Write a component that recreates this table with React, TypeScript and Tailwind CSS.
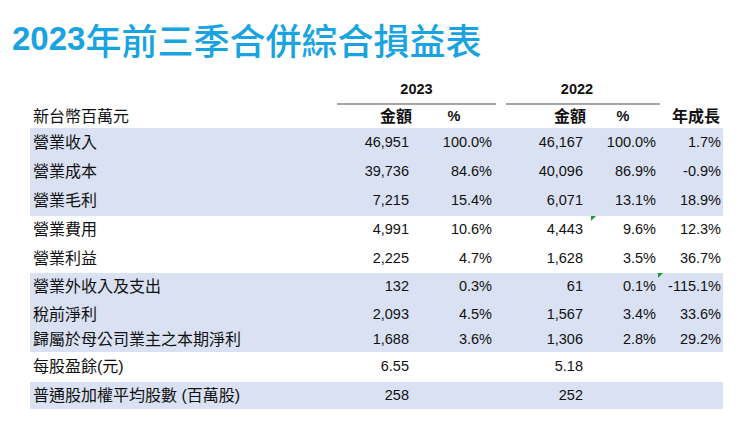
const rows = [
  { label: "營業收入", a: "46,951", ap: "100.0%", b: "46,167", bp: "100.0%", g: "1.7%", h: "h-[29px]", shade: true },
  { label: "營業成本", a: "39,736", ap: "84.6%", b: "40,096", bp: "86.9%", g: "-0.9%", h: "h-[29px]", shade: true },
  { label: "營業毛利", a: "7,215", ap: "15.4%", b: "6,071", bp: "13.1%", g: "18.9%", h: "h-[30px]", shade: true },
  { label: "營業費用", a: "4,991", ap: "10.6%", b: "4,443", bp: "9.6%", g: "12.3%", h: "h-[28px]", shade: false },
  { label: "營業利益", a: "2,225", ap: "4.7%", b: "1,628", bp: "3.5%", g: "36.7%", h: "h-[29px]", shade: false },
  { label: "營業外收入及支出", a: "132", ap: "0.3%", b: "61", bp: "0.1%", g: "-115.1%", h: "h-[28px]", shade: true },
  { label: "稅前淨利", a: "2,093", ap: "4.5%", b: "1,567", bp: "3.4%", g: "33.6%", h: "h-[27px]", shade: true },
  { label: "歸屬於母公司業主之本期淨利", a: "1,688", ap: "3.6%", b: "1,306", bp: "2.8%", g: "29.2%", h: "h-[24px]", shade: true },
  { label: "每股盈餘(元)", a: "6.55", ap: "", b: "5.18", bp: "", g: "", h: "h-[30px]", shade: false },
  { label: "普通股加權平均股數 (百萬股)", a: "258", ap: "", b: "252", bp: "", g: "", h: "h-[27px]", shade: true },
];

const cols = "grid grid-cols-[307px_75px_84px_90px_74px_63px] items-center";

export default function App() {
  return (
    <div className="relative w-[740px] h-[422px] bg-white text-[#111] font-['Liberation_Sans','Noto_Sans_CJK_TC',sans-serif] overflow-hidden">
      <div className="h-[77px] flex items-center pl-[12px] text-[#19a3e0]">
        <span className="text-[33px] font-bold leading-none">2023</span>
        <span className="text-[36px] font-medium leading-none font-['Noto_Sans_CJK_TC',sans-serif]">
          年前三季合併綜合損益表
        </span>
      </div>

      <div className="ml-[30px] w-[693px]">
        <div className={`${cols} h-[28px]`}>
          <div />
          <div className="col-span-2 h-full flex items-center justify-center border-b-2 border-[#a6a6a6] text-[14.5px] font-bold">
            2023
          </div>
          <div className="col-span-2 h-full ml-[10px] pr-[12px] flex items-center justify-center border-b-2 border-[#a6a6a6] text-[14.5px] font-bold">
            2022
          </div>
          <div />
        </div>

        <div className={`${cols} h-[23px] text-[16px]`}>
          <div className="pl-[3px]">新台幣百萬元</div>
          <div className="text-right font-bold">金額</div>
          <div className="text-center font-bold text-[14.5px]">%</div>
          <div className="text-right font-bold">金額</div>
          <div className="text-center font-bold text-[14.5px]">%</div>
          <div className="text-right pr-[3px] font-bold">年成長</div>
        </div>

        {rows.map((r) => (
          <div key={r.label} className={`${cols} ${r.h} ${r.shade ? "bg-[#d9e1f2]" : ""}`}>
            <div className="pl-[3px] text-[16px] whitespace-nowrap">{r.label}</div>
            <div className="text-right pr-[3px] text-[14.5px]">{r.a}</div>
            <div className="text-right pr-[4px] text-[14.5px]">{r.ap}</div>
            <div className="text-right pr-[3px] text-[14.5px]">{r.b}</div>
            <div className="text-right pr-[4px] text-[14.5px]">{r.bp}</div>
            <div className="text-right pr-[2px] text-[14.5px]">{r.g}</div>
          </div>
        ))}
      </div>

      {/* excel error markers */}
      <span className="absolute left-[591px] top-[216px] w-0 h-0 border-t-[5px] border-r-[5px] border-t-[#1e9a2c] border-r-transparent" />
      <span className="absolute left-[658px] top-[273px] w-0 h-0 border-t-[5px] border-r-[5px] border-t-[#1e9a2c] border-r-transparent" />
    </div>
  );
}
